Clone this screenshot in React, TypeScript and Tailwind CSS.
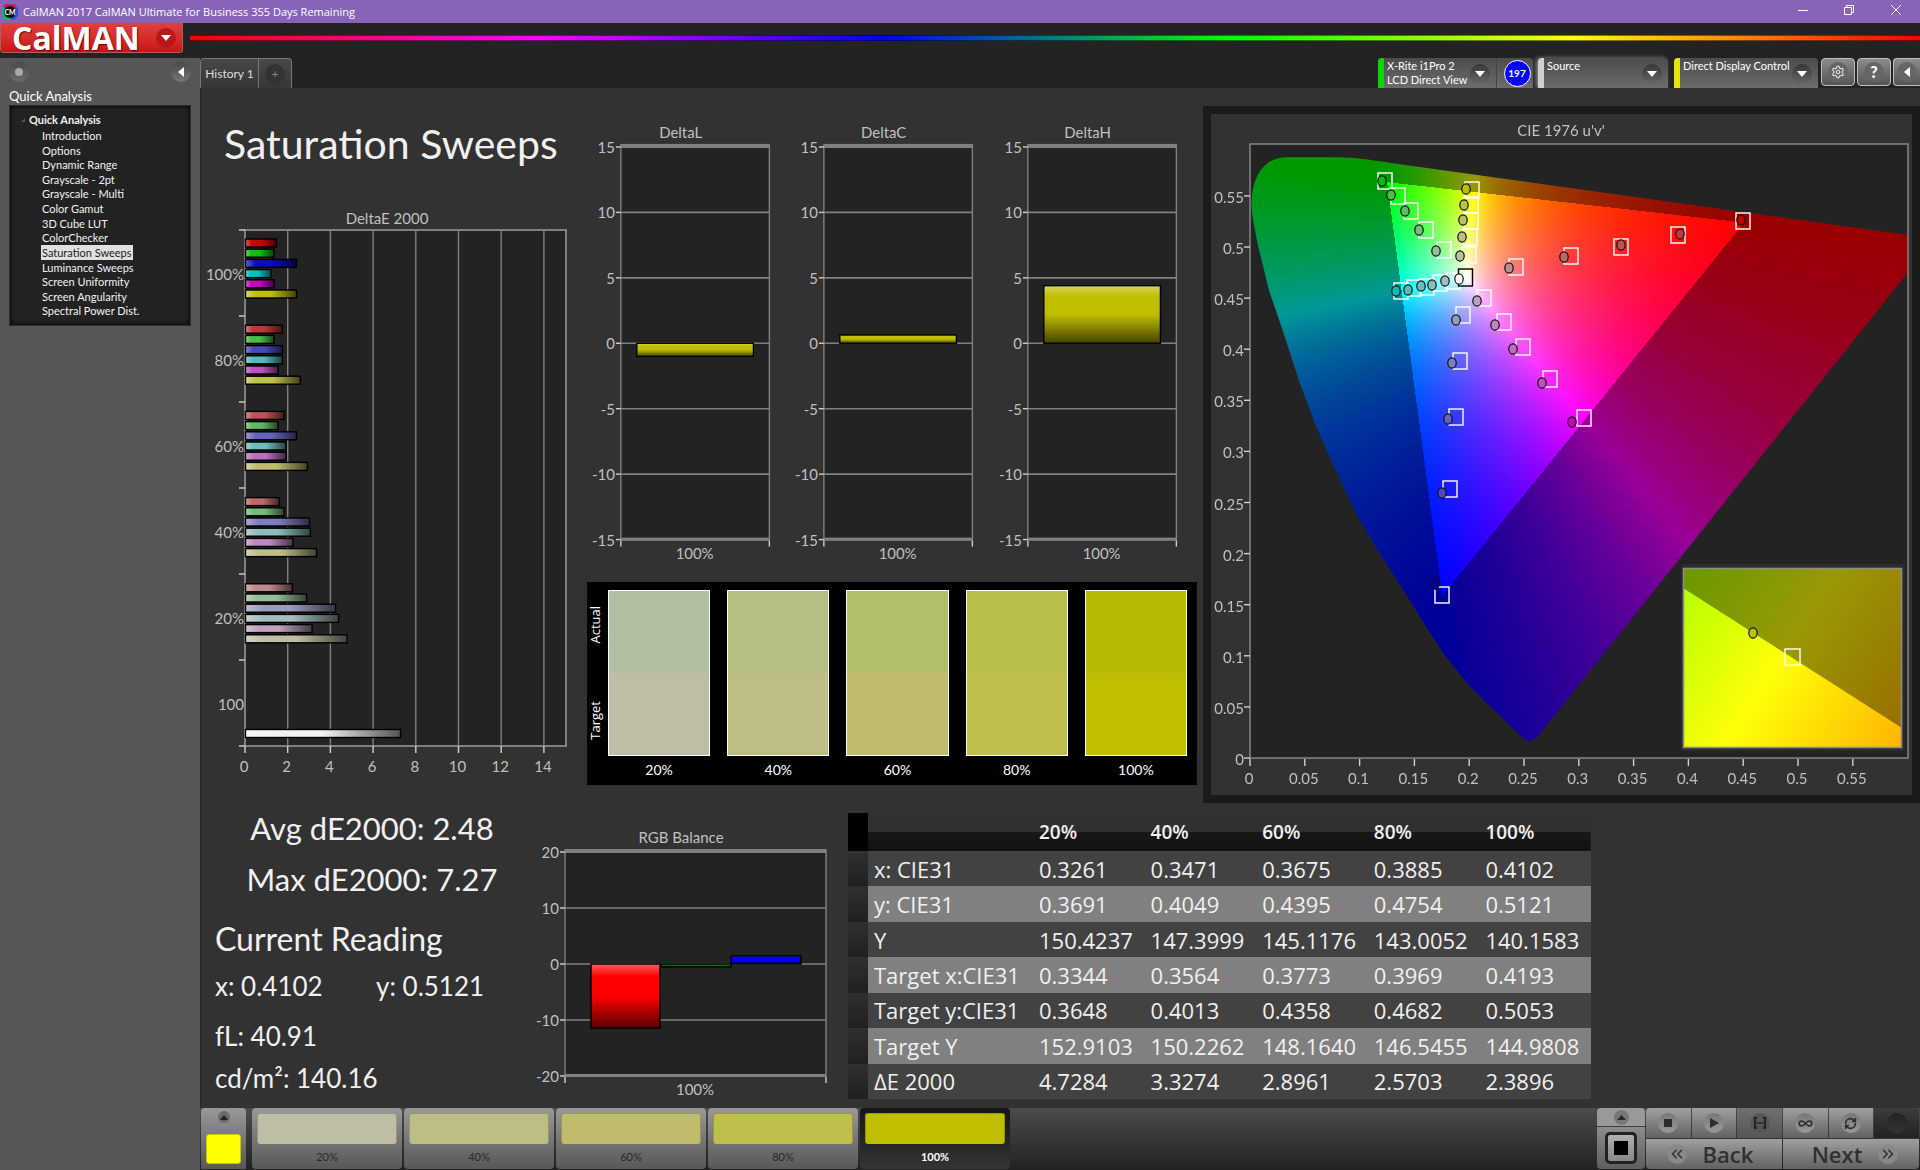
/**
 * CalMAN workflow window: Saturation Sweeps page
 */

import { useEffect, useRef } from "react";
import type { ReactNode } from "react";
import { ChevronsLeft, ChevronsRight, Infinity as InfinityIcon, RefreshCw, Settings } from "lucide-react";

const PAGES = [
  "Introduction",
  "Options",
  "Dynamic Range",
  "Grayscale - 2pt",
  "Grayscale - Multi",
  "Color Gamut",
  "3D Cube LUT",
  "ColorChecker",
  "Saturation Sweeps",
  "Luminance Sweeps",
  "Screen Uniformity",
  "Screen Angularity",
  "Spectral Power Dist.",
];

// dE2000 per saturation level, in the order R G B C M Y
const DELTA_E = [
  { label: "100%", values: [1.45, 1.34, 2.39, 1.2, 1.34, 2.39], colors: ["#bf0a0a", "#0abf0a", "#0a0abf", "#0abfbf", "#bf0abf", "#bfbf0a"] },
  { label: "80%", values: [1.73, 1.34, 1.73, 1.73, 1.53, 2.57], colors: ["#bf3838", "#48bf48", "#4848bf", "#50bcbc", "#bf50bf", "#bfbf4b"] },
  { label: "60%", values: [1.81, 1.53, 2.39, 1.9, 1.9, 2.9], colors: ["#bf5252", "#62bb62", "#6464bf", "#70bcbc", "#bf6ebf", "#bfbd6b"] },
  { label: "40%", values: [1.59, 1.81, 3.0, 3.04, 2.23, 3.33], colors: ["#bf6868", "#7abb7a", "#7e7ebf", "#8cbcbc", "#bf88bf", "#bfbd86"] },
  { label: "20%", values: [2.2, 2.86, 4.22, 4.36, 3.12, 4.76], colors: ["#bf8a8a", "#98bb98", "#9a9abf", "#a4bcbc", "#bfa2bf", "#bfbda4"] },
];

const SWEEP = [
  { label: "20%", actual: "#b3bfa2", target: "#bfbda4" },
  { label: "40%", actual: "#b4bf86", target: "#bfbd86" },
  { label: "60%", actual: "#b4bf6b", target: "#bfbd6b" },
  { label: "80%", actual: "#b7bf48", target: "#bfbf4b" },
  { label: "100%", actual: "#b5bc00", target: "#bfbe00" },
];

const ROWS = [
  ["x: CIE31", "0.3261", "0.3471", "0.3675", "0.3885", "0.4102"],
  ["y: CIE31", "0.3691", "0.4049", "0.4395", "0.4754", "0.5121"],
  ["Y", "150.4237", "147.3999", "145.1176", "143.0052", "140.1583"],
  ["Target x:CIE31", "0.3344", "0.3564", "0.3773", "0.3969", "0.4193"],
  ["Target y:CIE31", "0.3648", "0.4013", "0.4358", "0.4682", "0.5053"],
  ["Target Y", "152.9103", "150.2262", "148.1640", "146.5455", "144.9808"],
  ["ΔE 2000", "4.7284", "3.3274", "2.8961", "2.5703", "2.3896"],
];

// target x/y, measured x/y, fill of the measured point
const POINTS: [number, number, number, number, string][] = [
  [174, 67, 171, 67, "#00bf00"],
  [187, 82, 180, 81, "#48bf48"],
  [200, 97, 194, 97, "#62bb62"],
  [215, 116, 208, 116, "#7abb7a"],
  [233, 136, 225, 137, "#98bb98"],
  [261, 76, 255, 75, "#bfbf00"],
  [260, 91, 253, 91, "#bfbf4b"],
  [260, 107, 252, 106, "#bfbd6b"],
  [259, 123, 251, 123, "#bfbd86"],
  [258, 141, 249, 142, "#bfbda4"],
  [190, 177, 185, 177, "#00bfbf"],
  [203, 174, 197, 176, "#50bcbc"],
  [216, 173, 210, 172, "#70bcbc"],
  [229, 169, 221, 171, "#8cbcbc"],
  [242, 167, 234, 167, "#a4bcbc"],
  [532, 107, 530, 106, "#bf0000"],
  [467, 121, 469, 120, "#bf3838"],
  [410, 133, 410, 131, "#bf5252"],
  [360, 142, 353, 143, "#bf6868"],
  [305, 153, 298, 154, "#bf8a8a"],
  [273, 184, 266, 187, "#bfa2bf"],
  [293, 208, 284, 211, "#bf88bf"],
  [312, 233, 302, 235, "#bf6ebf"],
  [339, 265, 331, 269, "#bf50bf"],
  [373, 304, 361, 308, "#bf00bf"],
  [252, 201, 245, 206, "#9a9abf"],
  [249, 247, 241, 249, "#7e7ebf"],
  [245, 303, 237, 305, "#6464bf"],
  [239, 375, 231, 379, "#4848bf"],
  [231, 481, 224, 470, "#0000a0"],
];

const LOCUS =
  "M697.5 121 L181.8 49.3 Q145 43.3 126.7 43.3 L76 43.3 Q66 43.3 58 48 Q41 60 40.4 90 L41 100 L46.4 129 L57.9 176 L71.6 216 " +
  "L87.7 266 L103.8 309 L119.9 346 L147.4 404 L163.5 431 L191 474 L218.6 518 L232 539 L257.6 571 L282.8 596 L311 623 " +
  "Q317 631 326.5 622.7 L547.3 346 L697.5 157.7 Z";

function Shades() {
  return (
    <svg className="h-0 w-0" aria-hidden="true">
      <defs>
        <linearGradient id="shadeDown" x1="0" y1="0" x2="0" y2="1">
          <stop offset="0" stopColor="#fff" stopOpacity="0.35" />
          <stop offset="0.2" stopColor="#fff" stopOpacity="0" />
          <stop offset="0.5" stopColor="#000" stopOpacity="0" />
          <stop offset="1" stopColor="#000" stopOpacity="0.65" />
        </linearGradient>
        <linearGradient id="shadeAcross" x1="0" y1="0" x2="1" y2="0">
          <stop offset="0" stopColor="#fff" stopOpacity="0.35" />
          <stop offset="0.2" stopColor="#fff" stopOpacity="0" />
          <stop offset="0.5" stopColor="#000" stopOpacity="0" />
          <stop offset="1" stopColor="#000" stopOpacity="0.65" />
        </linearGradient>
      </defs>
    </svg>
  );
}

type BarProps = { x: number; y: number; w: number; h: number; color: string; shade: string };

function Bar({ x, y, w, h, color, shade }: BarProps) {
  return (
    <g>
      <rect x={x} y={y} width={w} height={h} fill={color} />
      <rect x={x} y={y} width={w} height={h} fill={`url(#${shade})`} stroke="#000" strokeWidth="1.4" />
    </g>
  );
}

function DeltaEChart() {
  const px = (v: number) => 44 + v * 21.35;
  return (
    <svg viewBox="0 0 379 590" className="block w-full text-[15px]" fill="#c0c0c0">
      <text x="186" y="24" textAnchor="middle">DeltaE 2000</text>
      <rect x="44" y="30" width="321" height="516" fill="#232323" stroke="#808080" strokeWidth="2" />
      {[0, 2, 4, 6, 8, 10, 12, 14].map((v) => (
        <g key={v}>
          <line x1={px(v)} x2={px(v)} y1="30" y2="546" stroke="#808080" strokeWidth="1.4" />
          <line x1={px(v)} x2={px(v)} y1="546" y2="553" stroke="#d0d0d0" strokeWidth="1.4" />
          <text x={px(v) - 1} y="572" textAnchor="middle">{v}</text>
        </g>
      ))}
      {[0, 1, 2, 3, 4, 5, 6].map((i) => (
        <line key={i} x1="38" x2="44" y1={30 + i * 86} y2={30 + i * 86} stroke="#d0d0d0" strokeWidth="1.4" />
      ))}
      {DELTA_E.map((group, g) => (
        <g key={group.label}>
          <text x="43" y={80 + g * 86} textAnchor="end">{group.label}</text>
          {group.values.map((v, i) => (
            <Bar key={i} x={44.5} y={39 + g * 86.2 + i * 10.2} w={v * 21.35} h={8} color={group.colors[i]} shade="shadeAcross" />
          ))}
        </g>
      ))}
      <text x="43" y="510" textAnchor="end">100</text>
      <Bar x={44.5} y={529.5} w={155} h={8} color="#f2f2f2" shade="shadeAcross" />
    </svg>
  );
}

function DeltaChart({ title, value }: { title: string; value: number }) {
  const py = (v: number) => 224 - v * 13.13;
  return (
    <svg viewBox="0 0 204 450" className="block w-full text-[15px]" fill="#c0c0c0">
      <text x="101" y="18" textAnchor="middle">{title}</text>
      <rect x="41" y="25" width="149" height="396" fill="#232323" stroke="#808080" strokeWidth="1.4" />
      <rect x="41" y="24" width="149" height="4" fill="#808080" />
      <rect x="41" y="419" width="149" height="3" fill="#808080" />
      {[15, 10, 5, 0, -5, -10, -15].map((v) => (
        <g key={v}>
          <line x1="36" x2="41" y1={py(v)} y2={py(v)} stroke="#d0d0d0" strokeWidth="1.4" />
          <line x1="41" x2="190" y1={py(v)} y2={py(v)} stroke="#808080" strokeWidth="1.6" />
          <text x="35" y={py(v) + 6} textAnchor="end">{v}</text>
        </g>
      ))}
      <path d="M41 422v6M190 422v6" stroke="#d0d0d0" strokeWidth="1.4" />
      <Bar x={57} y={value > 0 ? py(value) : 224} w={117} h={Math.abs(value) * 13.13} color="#bfbf00" shade="shadeDown" />
      <text x="115" y="440" textAnchor="middle">100%</text>
    </svg>
  );
}

function RgbBalance() {
  const py = (v: number) => 139 - v * 5.6;
  return (
    <svg viewBox="0 0 312 283" className="block w-full text-[15px]" fill="#c0c0c0">
      <text x="145" y="18" textAnchor="middle">RGB Balance</text>
      <rect x="29" y="25" width="261" height="226" fill="#232323" stroke="#808080" strokeWidth="1.4" />
      <rect x="29" y="24" width="261" height="4" fill="#808080" />
      <rect x="29" y="249" width="261" height="3" fill="#808080" />
      {[20, 10, 0, -10, -20].map((v) => (
        <g key={v}>
          <line x1="24" x2="29" y1={py(v)} y2={py(v)} stroke="#d0d0d0" strokeWidth="1.4" />
          <line x1="29" x2="290" y1={py(v)} y2={py(v)} stroke="#808080" strokeWidth="1.6" />
          <text x="23" y={py(v) + 6} textAnchor="end">{v}</text>
        </g>
      ))}
      <path d="M29 252v6M290 252v6" stroke="#d0d0d0" strokeWidth="1.4" />
      <Bar x={55} y={139} w={69} h={64} color="#ff0000" shade="shadeDown" />
      <Bar x={125} y={139} w={70} h={3} color="#007000" shade="shadeDown" />
      <Bar x={195} y={131} w={70} h={8} color="#0000ff" shade="shadeDown" />
      <text x="159" y="270" textAnchor="middle">100%</text>
    </svg>
  );
}

// Paints every u'v' coordinate with its Rec.709 colour, dimmed outside the gamut
function paintDiagram(canvas: HTMLCanvasElement) {
  const ctx = canvas.getContext("2d");
  if (!ctx) return;
  const { width, height } = canvas;
  const image = ctx.createImageData(width, height);
  for (let py = 0; py < height; py++) {
    for (let px = 0; px < width; px++) {
      const u = (px - 38.6) / 1096;
      const v = Math.max((642.5 - py) / 1022, 0.001);
      const X = (9 * u) / (4 * v);
      const Z = (12 - 3 * u - 20 * v) / (4 * v);
      const r = 3.2406 * X - 1.5372 - 0.4986 * Z;
      const g = -0.9689 * X + 1.8758 + 0.0415 * Z;
      const b = 0.0557 * X - 0.204 + 1.057 * Z;
      const max = Math.max(r, g, b);
      const level = (Math.min(r, g, b) < 0 ? 153 : 255) / max;
      const i = (py * width + px) * 4;
      image.data[i] = Math.max(r, 0) * level;
      image.data[i + 1] = Math.max(g, 0) * level;
      image.data[i + 2] = Math.max(b, 0) * level;
      image.data[i + 3] = 255;
    }
  }
  ctx.putImageData(image, 0, 0);
  ctx.globalCompositeOperation = "destination-in";
  ctx.fill(new Path2D(LOCUS));
  ctx.globalCompositeOperation = "destination-over";
  ctx.fillStyle = "#232323";
  ctx.fillRect(39, 30, 658, 614);
}

function CieChart() {
  const canvasRef = useRef<HTMLCanvasElement>(null);

  useEffect(() => {
    if (canvasRef.current) paintDiagram(canvasRef.current);
  }, []);

  return (
    <div className="grid border-8 border-[#1a1a1a] bg-[#323232]">
      <canvas ref={canvasRef} width={701} height={681} className="col-start-1 row-start-1 w-full" />
      <svg viewBox="0 0 701 681" className="col-start-1 row-start-1 w-full text-[15px]" fill="#c0c0c0">
        <defs>
          <linearGradient id="insetHue" gradientUnits="userSpaceOnUse" x1="451" y1="488" x2="687" y2="641">
            <stop offset="0" stopColor="#b0ff00" />
            <stop offset="0.466" stopColor="#ffff08" />
            <stop offset="1" stopColor="#ffb400" />
          </linearGradient>
        </defs>
        <text x="350" y="22" textAnchor="middle">CIE 1976 u'v'</text>
        <rect x="39" y="30" width="658" height="614" fill="none" stroke="#808080" strokeWidth="1.6" />
        {["0", "0.05", "0.1", "0.15", "0.2", "0.25", "0.3", "0.35", "0.4", "0.45", "0.5", "0.55"].map((t, i) => (
          <g key={t}>
            <line x1={39 + i * 54.8} x2={39 + i * 54.8} y1="645" y2="652" stroke="#d0d0d0" strokeWidth="1.4" />
            <text x={38 + i * 54.8} y="670" textAnchor="middle">{t}</text>
            <line x1="33" x2="39" y1={644 - i * 51.1} y2={644 - i * 51.1} stroke="#d0d0d0" strokeWidth="1.4" />
            <text x="33" y={651 - i * 51.1} textAnchor="end">{t}</text>
          </g>
        ))}
        {POINTS.map(([tx, ty, mx, my, fill]) => (
          <g key={`${tx}-${ty}`}>
            <rect x={tx - 7} y={ty - 8} width="14" height="16" fill="none" stroke="#fff" strokeWidth="1.4" />
            <ellipse cx={mx} cy={my} rx="4.2" ry="5.2" fill={fill} stroke="#111" strokeWidth="1.2" />
          </g>
        ))}
        <rect x="247.5" y="155" width="14" height="17" fill="none" stroke="#000" strokeWidth="1.4" />
        <ellipse cx="248" cy="165" rx="4.2" ry="5.2" fill="#fff" stroke="#111" strokeWidth="1.2" />

        {/* Zoomed view of the selected point */}
        <rect x="470" y="450" width="224" height="187" fill="#2c2c2c" />
        <rect x="472" y="454" width="219" height="180" fill="url(#insetHue)" />
        <path d="M472 454H691V614L472 474Z" fill="#000" fillOpacity="0.4" />
        <rect x="472.5" y="454.5" width="218" height="179" fill="none" stroke="#8c8c8c" strokeWidth="1.6" />
        <rect x="574" y="535" width="15" height="16" fill="none" stroke="#fff" strokeWidth="1.4" />
        <ellipse cx="542" cy="519" rx="4.2" ry="5.2" fill="#bfbf00" stroke="#111" strokeWidth="1.2" />
      </svg>
    </div>
  );
}

function SwatchPanel() {
  return (
    <div className="ml-[7px] flex h-[203px] bg-black pr-[10px] pt-2 text-white">
      <div className="flex h-[166px] w-[21px] flex-col-reverse justify-between py-4 font-['Open_Sans',sans-serif] text-[13px] font-medium leading-4">
        <span className="rotate-180 pl-[5px] text-center [writing-mode:vertical-rl]">Target</span>
        <span className="rotate-180 pl-[5px] text-center [writing-mode:vertical-rl]">Actual</span>
      </div>
      <div className="grid flex-1 grid-cols-5 gap-[17px]">
        {SWEEP.map((s) => (
          <div key={s.label} className="text-center text-sm leading-7">
            <div className="flex h-[166px] flex-col border border-white">
              <div className="flex-1" style={{ backgroundColor: s.actual }} />
              <div className="flex-1" style={{ backgroundColor: s.target }} />
            </div>
            {s.label}
          </div>
        ))}
      </div>
    </div>
  );
}

function Readings() {
  return (
    <div className="pl-[14px] text-[#f0f0f0]">
      <div className="pr-[7px] text-center text-[31px] leading-[51px]">
        <p>Avg dE2000: 2.48</p>
        <p>Max dE2000: 7.27</p>
      </div>
      <h2 className="pt-2 text-[32px] leading-[52px]">Current Reading</h2>
      <div className="text-[26px] leading-[42px]">
        <p className="flex">
          <span className="w-[161px]">x: 0.4102</span>
          <span>y: 0.5121</span>
        </p>
        <p className="pt-2">fL: 40.91</p>
        <p>cd/m²: 140.16</p>
      </div>
    </div>
  );
}

function DataTable() {
  return (
    <table className="mt-[10px] h-[286px] w-full table-fixed border-collapse text-left font-['Open_Sans',sans-serif] text-[22px] leading-7 text-[#f0f0f0]">
      <colgroup>
        <col className="w-5" />
        <col className="w-[165px]" />
        <col />
        <col />
        <col />
        <col />
        <col />
      </colgroup>
      <thead>
        <tr className="h-[38px] bg-linear-to-b from-[#303030] from-50% via-[#181818] via-50% to-[#111] text-[19px]">
          <td className="bg-black" />
          <td />
          {SWEEP.map((s) => (
            <th key={s.label} scope="col" className="p-0 pl-[6px] font-semibold">{s.label}</th>
          ))}
        </tr>
      </thead>
      <tbody>
        {ROWS.map(([name, ...cells]) => (
          <tr key={name} className="bg-[#424242] even:bg-[#808080]">
            <td className="bg-linear-to-b from-[#303030] to-[#202020]" />
            <th scope="row" className="whitespace-nowrap p-0 pl-[6px] font-normal">{name}</th>
            {cells.map((c) => (
              <td key={c} className="p-0 pl-[6px]">{c}</td>
            ))}
          </tr>
        ))}
      </tbody>
    </table>
  );
}

function RoundArrow() {
  return (
    <span className="flex size-5 shrink-0 items-center justify-center rounded-full bg-linear-to-b from-[#383838] to-[#666]">
      <svg viewBox="0 0 10 6" className="w-[10px]" fill="#fff"><path d="M0 0h10L5 6z" /></svg>
    </span>
  );
}

function DevicePicker({ lines, bar, className }: { lines: string[]; bar: string; className: string }) {
  return (
    <button aria-haspopup="menu" className={`flex h-[30px] overflow-hidden rounded-t bg-linear-to-b from-[#4c4c4c] to-[#6c6c6c] text-left ${className}`}>
      <span className={`w-[6px] shrink-0 self-stretch ${bar}`} />
      <span className="min-w-0 flex-1 whitespace-nowrap pl-[3px] pt-[1px] text-[11px] leading-[14px] text-white">
        {lines.map((l) => (
          <span key={l} className="block">{l}</span>
        ))}
      </span>
      <span className="pr-[6px] pt-[6px]">
        <RoundArrow />
      </span>
    </button>
  );
}

function Transport({ label, dark, children }: { label: string; dark?: boolean; children?: ReactNode }) {
  return (
    <button
      aria-label={label}
      className={`flex items-center justify-center bg-linear-to-b ${dark ? "from-[#3c3c3c] to-[#222]" : "from-[#a0a0a0] to-[#626262]"}`}
    >
      <span className={`flex size-5 items-center justify-center rounded-full bg-linear-to-b text-[#2c2c2c] ${dark ? "from-[#222] to-[#333]" : "from-[#777] to-[#999]"}`}>
        {children}
      </span>
    </button>
  );
}

function BottomBar() {
  return (
    <footer className="flex h-[62px] bg-linear-to-b from-[#4c4c4c] to-[#222]">
      <button aria-label="Current color" className="mb-px ml-px flex w-[45px] flex-col items-center justify-between rounded-t bg-linear-to-b from-[#999] to-[#585858] pb-[5px] pt-[3px]">
        <span className="flex size-3 items-center justify-center rounded-full bg-[#6a6a6a]">
          <svg viewBox="0 0 8 5" className="w-2" fill="#222"><path d="M0 5h8L4 0z" /></svg>
        </span>
        <span className="h-[30px] w-[35px] rounded-[3px] border border-[#c8c800] bg-[#ffff00]" />
      </button>
      <div className="ml-[6px] flex gap-[2px]">
        {SWEEP.map((s) => {
          const selected = s.label === "100%";
          return (
            <button
              key={s.label}
              className={`mb-px flex w-[150px] flex-col items-center rounded bg-linear-to-b px-[5px] pt-[5px] text-[11px] leading-[25px] ${
                selected ? "from-[#161616] to-[#343434] font-bold text-white" : "from-[#999] to-[#585858] text-[#2a2a2a]"
              }`}
            >
              <span className="h-9 w-full rounded-[3px] border border-b-0 border-black/20" style={{ backgroundColor: s.target }} />
              {s.label}
            </button>
          );
        })}
      </div>
      <div className="ml-auto flex gap-px pb-px pr-px">
        <div className="flex w-[48px] flex-col gap-px">
          <button aria-label="Expand" className="flex h-[18px] items-center justify-center rounded-t bg-[#999]">
            <span className="flex size-[15px] items-center justify-center rounded-full bg-[#777]">
              <svg viewBox="0 0 9 5" className="w-[9px]" fill="#2a2a2a"><path d="M0 5h9L4.500 0z" /></svg>
            </span>
          </button>
          <button aria-label="Stop reading" className="flex flex-1 items-center justify-center rounded-b bg-linear-to-b from-[#8c8c8c] to-[#5e5e5e]">
            <span className="flex size-[32px] items-center justify-center rounded-[5px] border-[3px] border-[#222] bg-linear-to-b from-[#b0b0b0] to-[#888]">
              <span className="size-[14px] bg-black" />
            </span>
          </button>
        </div>
        <div className="grid w-[273px] grid-cols-6 grid-rows-[30px_1fr] gap-px overflow-hidden rounded">
          <Transport label="Stop"><span className="size-2 bg-[#2c2c2c]" /></Transport>
          <Transport label="Play">
            <svg viewBox="0 0 9 10" className="ml-[2px] w-[9px]" fill="currentColor"><path d="M0 0l9 5-9 5z" /></svg>
          </Transport>
          <button aria-label="Read series" className="flex items-center justify-center bg-linear-to-b from-[#707070] to-[#555]">
            <svg viewBox="0 0 20 20" className="size-5" fill="none" stroke="#222" strokeWidth="2">
              <circle cx="10" cy="10" r="10" fill="#565656" stroke="none" />
              <path d="M7 5H5v10h2M13 5h2v10h-2" />
              <path d="M7 10h6" strokeDasharray="1.500 0.750" />
            </svg>
          </button>
          <Transport label="Continuous"><InfinityIcon size={15} strokeWidth={2.5} /></Transport>
          <Transport label="Refresh"><RefreshCw size={13} strokeWidth={3} /></Transport>
          <Transport label="Unused" dark />
          <button className="col-span-3 flex items-center justify-center gap-4 bg-linear-to-b from-[#a0a0a0] to-[#626262] pr-2 font-['Open_Sans',sans-serif] text-[22px] font-semibold leading-7 text-[#303030]">
            <span className="flex size-5 items-center justify-center rounded-full bg-[#888]"><ChevronsLeft size={18} /></span>
            Back
          </button>
          <button className="col-span-3 flex items-center justify-center gap-4 bg-linear-to-b from-[#a0a0a0] to-[#626262] pl-2 font-['Open_Sans',sans-serif] text-[22px] font-semibold leading-7 text-[#303030]">
            Next
            <span className="flex size-5 items-center justify-center rounded-full bg-[#888]"><ChevronsRight size={18} /></span>
          </button>
        </div>
      </div>
    </footer>
  );
}

function TitleBar() {
  return (
    <div className="flex h-[23px] items-center bg-[#8764b8] text-white">
      <svg viewBox="0 0 16 16" className="ml-[2px] size-4">
        <path d="M8 8L1 3A8 8 0 0 1 15 3z" fill="#d4145a" />
        <path d="M8 8L15 3A8 8 0 0 1 9 16z" fill="#2a4fe0" />
        <path d="M8 8L9 16A8 8 0 0 1 1 3z" fill="#14b45a" />
        <circle cx="8" cy="8" r="6" fill="#111" />
        <text x="8" y="11" textAnchor="middle" fill="#fff" className="text-[7px] font-bold">CM</text>
      </svg>
      <span className="ml-[5px] flex-1 font-['Open_Sans',sans-serif] text-[11px] leading-4">
        CalMAN 2017 CalMAN Ultimate for Business 355 Days Remaining
      </span>
      <button aria-label="Minimize" className="flex h-full w-[46px] items-center justify-center pb-[3px]">
        <svg viewBox="0 0 10 10" className="w-[10px]" stroke="#fff"><path d="M0 5.500h10" /></svg>
      </button>
      <button aria-label="Restore" className="flex h-full w-[45px] items-center justify-center pb-[3px]">
        <svg viewBox="0 0 10 10" className="w-[10px]" stroke="#fff" fill="none"><path d="M.5 2.500h7v7h-7zM2.500 2.500v-2h7v7h-2" /></svg>
      </button>
      <button aria-label="Close" className="flex h-full w-[49px] items-center justify-center pb-[3px]">
        <svg viewBox="0 0 10 10" className="w-[10px]" stroke="#fff"><path d="M0 0l10 10M10 0L0 10" /></svg>
      </button>
    </div>
  );
}

function Sidebar() {
  return (
    <aside className="w-[200px] shrink-0 bg-[#565656] px-[9px] pt-1">
      <div className="flex h-5 items-center justify-between">
        <span className="flex size-5 items-center justify-center rounded-full bg-linear-to-b from-[#4a4a4a] to-[#6c6c6c]">
          <span className="size-2 rounded-full bg-[#aaa]" />
        </span>
        <button aria-label="Collapse" className="flex size-5 items-center justify-center rounded-full bg-linear-to-b from-[#4a4a4a] to-[#757575]">
          <svg viewBox="0 0 6 10" className="h-[10px]" fill="#fff"><path d="M6 0v10L0 5z" /></svg>
        </button>
      </div>
      <h2 className="pt-[6px] text-[13px] leading-[17px] text-white">Quick Analysis</h2>
      <nav className="h-[221px] border border-[#2c2c2c] bg-[#222] pt-[6px] text-[#f2f2f2] shadow-[inset_0_0_5px_#000]">
        <p className="flex items-center gap-1 pl-[11px] text-[11px] font-bold leading-4">
          <svg viewBox="0 0 4 4" className="w-1" fill="#555"><path d="M4 0v4H0z" /></svg>
          Quick Analysis
        </p>
        <ul className="grid h-[190px] auto-rows-fr pl-[31px] text-[11px] leading-[15px]">
          {PAGES.map((page) => (
            <li key={page}>
              <a href="#" className={page === "Saturation Sweeps" ? "block w-fit bg-[#e0e0e0] px-px text-[#222]" : "block w-fit px-px"}>
                {page}
              </a>
            </li>
          ))}
        </ul>
      </nav>
    </aside>
  );
}

export default function App() {
  const squareButton = "flex h-7 shrink-0 items-center justify-center rounded border border-[#c0c0c0] bg-linear-to-b from-[#8c8c8c] to-[#555]";
  return (
    <div className="flex min-h-screen flex-col bg-[#232323] font-[Lato,sans-serif]">
      <Shades />
      <TitleBar />
      <header className="flex h-[35px]">
        <button className="flex h-[30px] w-[183px] items-center rounded-b border border-t-0 border-[#a86060] bg-linear-to-b from-[#e04040] to-[#c81414] pl-[11px] font-['Open_Sans',sans-serif] text-[32px] font-bold leading-7 text-white [text-shadow:1px_1px_1px_#600]">
          CalMAN
          <span className="ml-auto mr-[6px] flex size-5 items-center justify-center rounded-full bg-[#b81818]">
            <svg viewBox="0 0 10 6" className="w-[10px]" fill="#fff"><path d="M0 0h10L5 6z" /></svg>
          </span>
        </button>
        <div className="ml-[7px] mt-3 h-[6px] flex-1 border-y border-black/50 bg-[linear-gradient(to_right,#f00,#f0f_20%,#00f_40%,#0f0_60%,#ff0_80%,#f00)]" />
      </header>

      <div className="flex flex-1">
        <Sidebar />
        <div className="flex min-w-0 flex-1 flex-col">
          <div className="flex h-[30px]">
            <div className="flex overflow-hidden rounded-t border border-b-0 border-[#777] bg-linear-to-b from-[#484848] to-[#363636] text-xs text-[#ddd]">
              <button className="w-[58px] border-r border-[#777]">History 1</button>
              <button aria-label="Add history" className="flex w-[32px] items-center justify-center">
                <span className="flex size-5 items-center justify-center rounded-full bg-[#333] text-[#888]">+</span>
              </button>
            </div>
            <div className="ml-auto flex">
              <DevicePicker lines={["X-Rite i1Pro 2", "LCD Direct View"]} bar="bg-[#00dc00]" className="w-[119px] rounded-tr-none border-r border-[#444]" />
              <button className="mr-[5px] flex w-9 items-center justify-center rounded-tr bg-linear-to-b from-[#4c4c4c] to-[#6c6c6c] pl-1">
                <span className="flex size-[27px] items-center justify-center rounded-full border border-white bg-[#0000ff] text-[10px] font-bold text-white">197</span>
              </button>
              <DevicePicker lines={["Source"]} bar="bg-[#d0d0d0]" className="w-[130px] shadow-[-2px_0_4px_#888]" />
              <DevicePicker lines={["Direct Display Control"]} bar="bg-[#e6e600]" className="ml-[6px] w-[144px]" />
              <button aria-label="Settings" className={`${squareButton} ml-[3px] w-[34px]`}>
                <span className="flex size-5 items-center justify-center rounded-full bg-[#666] text-[#ddd]"><Settings size={14} /></span>
              </button>
              <button aria-label="Help" className={`${squareButton} ml-[2px] w-[34px]`}>
                <span className="flex size-5 items-center justify-center rounded-full bg-[#666] text-base font-black text-white">?</span>
              </button>
              <button aria-label="Collapse panel" className={`${squareButton} ml-[2px] w-[27px] rounded-r-none border-r-0`}>
                <span className="flex size-5 items-center justify-center rounded-full bg-[#666]">
                  <svg viewBox="0 0 6 10" className="h-[10px]" fill="#fff"><path d="M6 0v10L0 5z" /></svg>
                </span>
              </button>
            </div>
          </div>

          <main className="flex-1 border-l border-[#262626] bg-[#323232]">
            <div className="grid grid-cols-[379fr_620fr_720fr]">
              <div>
                <h1 className="h-[112px] whitespace-nowrap pl-[23px] pt-[30px] text-[41px] leading-[52px] text-[#f0f0f0]">Saturation Sweeps</h1>
                <DeltaEChart />
              </div>
              <div className="pt-8">
                <div className="grid grid-cols-3 pr-[10px]">
                  <DeltaChart title="DeltaL" value={-1} />
                  <DeltaChart title="DeltaC" value={0.63} />
                  <DeltaChart title="DeltaH" value={4.4} />
                </div>
                <div className="pr-[3px] pt-[13px]">
                  <SwatchPanel />
                </div>
              </div>
              <div className="pl-[3px] pt-[18px]">
                <CieChart />
              </div>
            </div>
            <div className="grid grid-cols-[335fr_312fr_743fr_329fr]">
              <Readings />
              <div className="pt-[22px]">
                <RgbBalance />
              </div>
              <DataTable />
            </div>
          </main>

          <BottomBar />
        </div>
      </div>
    </div>
  );
}
